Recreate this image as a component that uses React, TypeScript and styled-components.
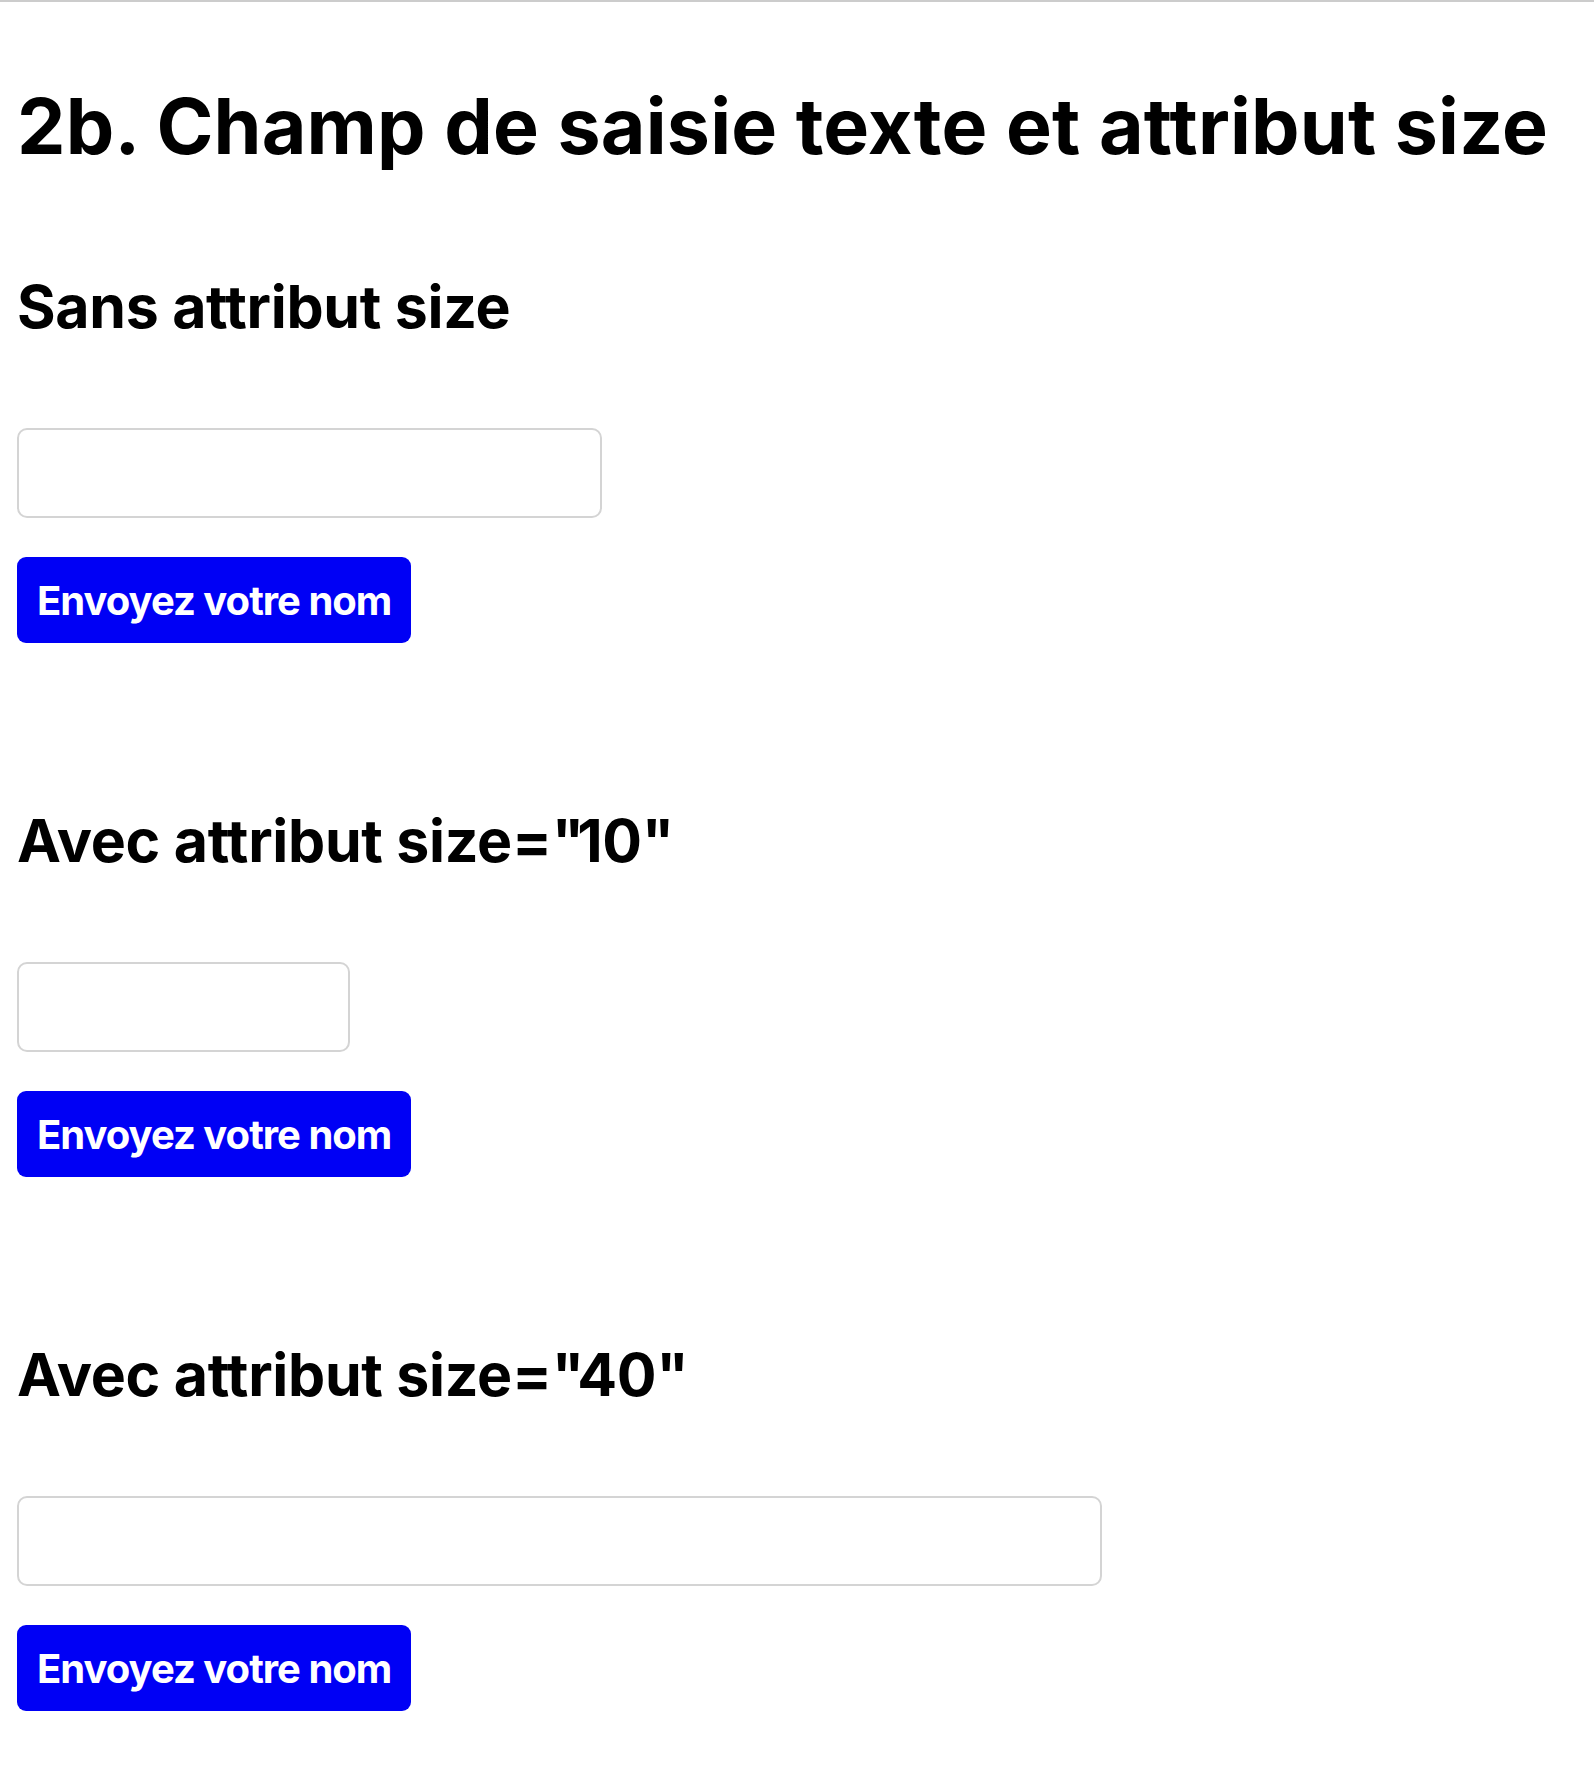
import React from "react";
import styled, { createGlobalStyle } from "styled-components";

const GlobalStyle = createGlobalStyle`
  html, body {
    margin: 0;
    padding: 0;
    background: #ffffff;
  }
  body {
    font-family: Inter, "Noto Sans", "Liberation Sans", sans-serif;
    color: #000000;
  }
`;

const sections = [
  { label: "Sans attribut size", size: null, width: 585 },
  { label: "Avec attribut size=", size: "10", width: 333 },
  { label: "Avec attribut size=", size: "40", width: 1085 },
];

const Page = styled.main`
  border-top: 2px solid #cccccc;
  padding: 0 17px 56px;
`;

const Title = styled.h1`
  margin: 78px 0 0;
  font-size: 77px;
  line-height: 92px;
  font-weight: 700;
  letter-spacing: 0.2px;
  white-space: nowrap;
`;

const Section = styled.section<{ $first?: boolean }>`
  display: flex;
  flex-direction: column;
  align-items: flex-start;
  margin-top: ${(p) => (p.$first ? "99px" : "162px")};
`;

const SectionTitle = styled.h2`
  margin: 0 0 86px;
  font-size: 59px;
  line-height: 71px;
  font-weight: 700;
  letter-spacing: -0.3px;
  white-space: nowrap;
`;

// straight quotes are narrower in the original font
const Quote = styled.span`
  letter-spacing: -7px;
`;

const TextField = styled.input<{ $width: number }>`
  box-sizing: border-box;
  width: ${(p) => p.$width}px;
  height: 90px;
  margin: 0 0 39px;
  padding: 0 16px;
  border: 2px solid #d4d4d4;
  border-radius: 10px;
  background: #ffffff;
  font-family: inherit;
  font-size: 40px;
  outline: none;
`;

const SubmitButton = styled.button`
  box-sizing: border-box;
  height: 86px;
  padding: 0 20px;
  border: none;
  border-radius: 9px;
  background: #0000f5;
  color: #ffffff;
  font-family: inherit;
  font-size: 40px;
  font-weight: 700;
  letter-spacing: -1px;
  white-space: nowrap;
  cursor: pointer;
`;

export default function App() {
  return (
    <Page>
      <GlobalStyle />
      <Title>2b. Champ de saisie texte et attribut size</Title>
      {sections.map((s, i) => (
        <Section key={i} $first={i === 0}>
          <SectionTitle>
            {s.label}
            {s.size && (
              <>
                <Quote>"</Quote>
                {s.size}
                <Quote>"</Quote>
              </>
            )}
          </SectionTitle>
          <TextField type="text" $width={s.width} aria-label="Votre nom" />
          <SubmitButton type="submit">Envoyez votre nom</SubmitButton>
        </Section>
      ))}
    </Page>
  );
}
